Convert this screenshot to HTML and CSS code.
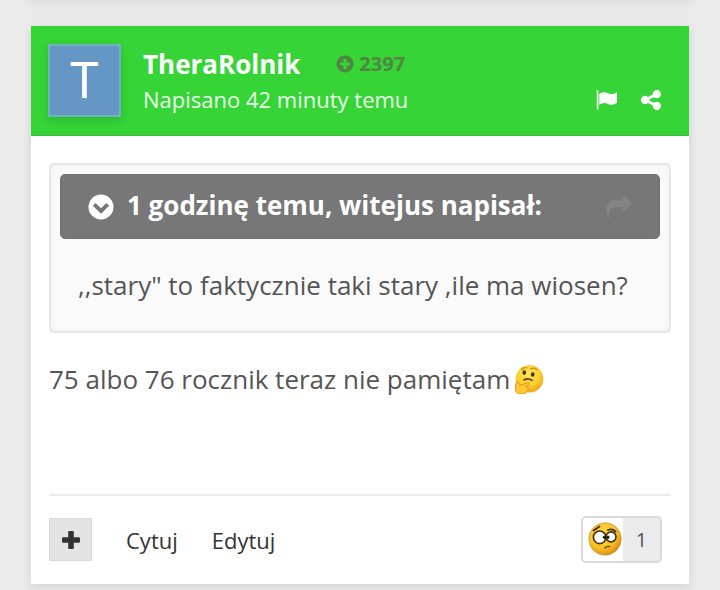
FILE: index.html
```html
<!DOCTYPE html>
<html lang="pl">
<head>
<meta charset="utf-8">
<meta name="viewport" content="width=device-width, initial-scale=1">
<title>TheraRolnik</title>
<link rel="stylesheet" href="styles.css">
</head>
<body>
<div class="previous-post"></div>
<article class="post">
  <header class="post-header">
    <a class="avatar" href="#">T</a>
    <div class="author">
      <div class="author-line">
        <a class="name" href="#">TheraRolnik</a>
        <span class="reputation">
          <svg class="reputation-icon" viewBox="0 0 18 18" aria-hidden="true"><path fill-rule="evenodd" d="M9 .5a8.500 8.500 0 1 1 0 17a8.500 8.500 0 0 1 0-17zM7.500 4v3.500H4v3h3.500V14h3v-3.500H14v-3h-3.500V4z"/></svg>
          2397
        </span>
      </div>
      <a class="date" href="#">Napisano 42 minuty temu</a>
    </div>
    <div class="tools">
      <button class="tool" type="button" aria-label="flag"><svg class="flag-icon" viewBox="0 0 22 20" aria-hidden="true"><path d="M.4 1.200a1 1 0 0 1 2 0V19.500H.8V2.500zM3.300 4C6 2.300 9 1.600 12 3.200S18 4.100 21 2v10.800c-3 2.100-6 2.600-9 1.100s-6-.7-8.700 1z"/></svg></button>
      <button class="tool" type="button" aria-label="share"><svg class="share-icon" viewBox="0 128 1536 1536" aria-hidden="true"><path d="M1216 1024q133 0 226.500 93.500t93.500 226.500-93.500 226.500-226.500 93.500-226.500-93.500-93.500-226.500q0-12 2-34l-360-180q-92 86-218 86-133 0-226.500-93.500t-93.500-226.500 93.500-226.500 226.500-93.500q126 0 218 86l360-180q-2-22-2-34 0-133 93.500-226.500t226.500-93.500 226.500 93.500 93.500 226.500-93.500 226.500-226.500 93.500q-126 0-218-86l-360 180q2 22 2 34t-2 34l360 180q92-86 218-86z"/></svg></button>
    </div>
  </header>
  <div class="post-body">
    <blockquote class="quote">
      <div class="quote-header">
        <svg class="chevron-icon" viewBox="0 0 26 26" aria-hidden="true"><circle cx="13" cy="13" r="12.500" fill="#fff"/><path d="M6.200 10.300L13 17l6.800-6.700" fill="none" stroke="#777" stroke-width="4"/></svg>
        <span class="quote-title">1 godzinę temu, witejus napisał:</span>
        <a class="quote-link" href="#" aria-label="1 godzinę temu"><svg class="forward-icon" viewBox="0 128 1792 1536" aria-hidden="true"><path d="M1792 640q0 26-19 45l-512 512q-19 19-45 19t-45-19-19-45v-256h-224q-98 0-175.500 6t-154 21.500-133 42.500-105.500 69.500-80 101-48.500 138.500-17.500 181q0 55 5 123 0 6 2.500 23.500t2.500 26.500q0 15-8.500 25t-23.500 10q-16 0-28-17-7-9-13-22t-13.500-30-10.500-24q-127-285-127-451 0-199 53-333 162-403 875-403h224v-256q0-26 19-45t45-19 45 19l512 512q19 19 19 45z"/></svg></a>
      </div>
      <p class="quote-text">,,stary" to faktycznie taki stary ,ile ma wiosen?</p>
    </blockquote>
    <p class="message">75 albo 76 rocznik teraz nie pamiętam
      <svg class="thinking" viewBox="0 0 30 30" role="img" aria-label="🤔">
        <defs><radialGradient id="skin" cx="45%" cy="32%" r="70%"><stop offset="0" stop-color="#ffe65a"/><stop offset=".6" stop-color="#fcd030"/><stop offset="1" stop-color="#ef9f20"/></radialGradient></defs>
        <circle cx="15.500" cy="14.800" r="13.800" fill="url(#skin)"/>
        <path d="M7.500 5.500q2.500-2.800 5.500-1.500M16.500 5q3.500-2 6.500.800" fill="none" stroke="#c98a1e" stroke-width="1.200" stroke-linecap="round"/>
        <ellipse cx="10.300" cy="8.600" rx="1.800" ry="2.300" fill="#49301b"/><ellipse cx="18.700" cy="10.500" rx="1.800" ry="2.300" fill="#49301b"/>
        <path d="M10 16q3.500-2.400 8 .3" fill="none" stroke="#5f3c16" stroke-width="1.600" stroke-linecap="round"/>
        <path d="M2 18.600c1-1.500 2.500-1 3 .7l1 2 7.500-2.400c2-.5 2.600 1.500.9 2.400l-3 1.400c2.500.2 3.200 1.500 2.600 3.400-.7 2.500-3.500 3.900-7 3.900-4 0-5.700-2-5.600-5.500z" fill="#ffc935" stroke="#e98b16" stroke-width=".9"/>
      </svg>
    </p>
    <footer class="post-footer">
      <button class="multiquote" type="button" aria-label="+"><svg class="plus-icon" viewBox="0 0 18 18" aria-hidden="true"><path d="M7.500 0h3q1.300 0 1.300 1.300v4.900h4.900Q18 6.200 18 7.500v3q0 1.300-1.300 1.300h-4.900v4.900q0 1.300-1.300 1.300h-3q-1.300 0-1.300-1.300v-4.900H1.300Q0 11.800 0 10.500v-3q0-1.300 1.300-1.300h4.900V1.300Q6.200 0 7.500 0z"/></svg></button>
      <a class="action" href="#">Cytuj</a>
      <a class="action" href="#">Edytuj</a>
      <button class="reaction" type="button">
        <span class="reaction-face"><svg class="confused" viewBox="0 0 34 34" aria-hidden="true">
          <defs><radialGradient id="face" cx="40%" cy="35%" r="65%"><stop offset="0" stop-color="#ffdc4a"/><stop offset=".7" stop-color="#f8bd26"/><stop offset="1" stop-color="#d99016"/></radialGradient></defs>
          <circle cx="17" cy="17" r="16.200" fill="url(#face)" stroke="#c99a3c" stroke-width=".8"/>
          <path d="M5.500 8.500L11.500 4.500M20 8q4-1.700 7.500 1.500" fill="none" stroke="#44330f" stroke-width="1.900" stroke-linecap="round"/>
          <circle cx="11.700" cy="15.300" r="6.300" fill="#fff" stroke="#44330f" stroke-width="1.600"/>
          <circle cx="23" cy="14.900" r="5" fill="#fff" stroke="#44330f" stroke-width="1.600"/>
          <circle cx="16.500" cy="15.300" r="1.700" fill="#2d210d"/><circle cx="19.800" cy="15.300" r="1.700" fill="#2d210d"/>
          <path d="M17 26q2-2.200 4.500-1.500" fill="none" stroke="#63440e" stroke-width="1.400" stroke-linecap="round"/>
        </svg></span>
        <span class="reaction-count">1</span>
      </button>
    </footer>
  </div>
</article>
</body>
</html>
```
FILE: styles.css
```css
* { box-sizing: border-box; }

body {
  margin: 0;
  padding: 0 31px 6px;
  background: #eaeaea;
  color: #555;
  font-family: "Open Sans", "Noto Sans", sans-serif;
}

a { color: inherit; text-decoration: none; }

button {
  padding: 0;
  border: 0;
  background: none;
  color: inherit;
  font: inherit;
}

svg { display: block; flex: none; }

.previous-post { box-shadow: 0 0 8px 2px rgba(0, 0, 0, 0.12); }

.post {
  margin-top: 26px;
  background: #fff;
  box-shadow: 0 3px 8px rgba(0, 0, 0, 0.1);
}

.post-header {
  display: flex;
  align-items: flex-start;
  padding: 18px 28px 18px 17px;
  border-bottom: 1px solid #3fbc3f;
  background: #36d436;
  color: #fff;
}

.avatar {
  display: flex;
  align-items: center;
  justify-content: center;
  width: 73px;
  height: 73px;
  border: 2px solid #6fb2c0;
  background: #6497c4;
  box-shadow: 0 3px 8px rgba(0, 0, 0, 0.15);
  font-family: Roboto, sans-serif;
  font-size: 50px;
  line-height: 1;
}

.author { flex: 1; margin-left: 22px; }

.author-line {
  display: flex;
  align-items: center;
  gap: 36px;
  height: 39px;
}

.name { font-size: 26px; font-weight: 700; }

.reputation {
  display: flex;
  align-items: center;
  gap: 5px;
  color: #4f8640;
  font-size: 20px;
  font-weight: 700;
}

.reputation-icon { width: 18px; height: 18px; fill: currentColor; }

.date {
  display: block;
  color: #eaffea;
  font-size: 22px;
  line-height: 32px;
}

.tools {
  display: flex;
  align-self: flex-end;
  align-items: center;
  gap: 23px;
  padding-bottom: 7px;
}

.tool { fill: #fff; }
.flag-icon { width: 22px; height: 20px; }
.share-icon { width: 20px; height: 20px; }

.post-body { padding: 27px 18px 21px; }

.quote {
  margin: 0;
  padding: 9px;
  border: 2px solid #e6e6e6;
  border-radius: 5px;
  background: #fafafa;
  box-shadow: inset 0 0 8px rgba(0, 0, 0, 0.04);
}

.quote-header {
  display: flex;
  align-items: center;
  height: 65px;
  padding: 0 27px;
  border: 1px solid #707070;
  border-radius: 5px;
  background: #777;
  color: #fff;
}

.chevron-icon { width: 26px; height: 26px; }

.quote-title {
  flex: 1;
  margin-left: 13px;
  padding-bottom: 4px;
  font-size: 26px;
  font-weight: 700;
  line-height: 36px;
}

.forward-icon { width: 26px; height: 22px; fill: #848484; }

.quote-text {
  margin: 0;
  padding: 28px 18px 19px;
  font-size: 26px;
  line-height: 36px;
}

.message {
  display: flex;
  align-items: center;
  gap: 4px;
  margin: 27px 0 0;
  padding-bottom: 96px;
  font-size: 26px;
  line-height: 38px;
}

.thinking { width: 30px; height: 30px; }

.post-footer {
  display: flex;
  align-items: center;
  gap: 34px;
  padding-top: 20px;
  border-top: 2px solid #ececec;
}

.multiquote {
  display: flex;
  align-items: center;
  justify-content: center;
  width: 43px;
  height: 43px;
  border: 1px solid #dadada;
  background: #e4e4e4;
}

.plus-icon { width: 18px; height: 18px; fill: #333; }

.action { color: #333; font-size: 22px; line-height: 32px; }

.reaction {
  display: flex;
  margin: 0 9px 0 auto;
  border: 2px solid #dadada;
  border-radius: 5px;
  background: #ebebeb;
  overflow: hidden;
}

.reaction-face { padding: 4px 1px 5px 5px; background: #fff; }
.confused { width: 34px; height: 34px; }

.reaction-count {
  align-self: center;
  width: 37px;
  font-size: 20px;
  text-align: center;
}
```
